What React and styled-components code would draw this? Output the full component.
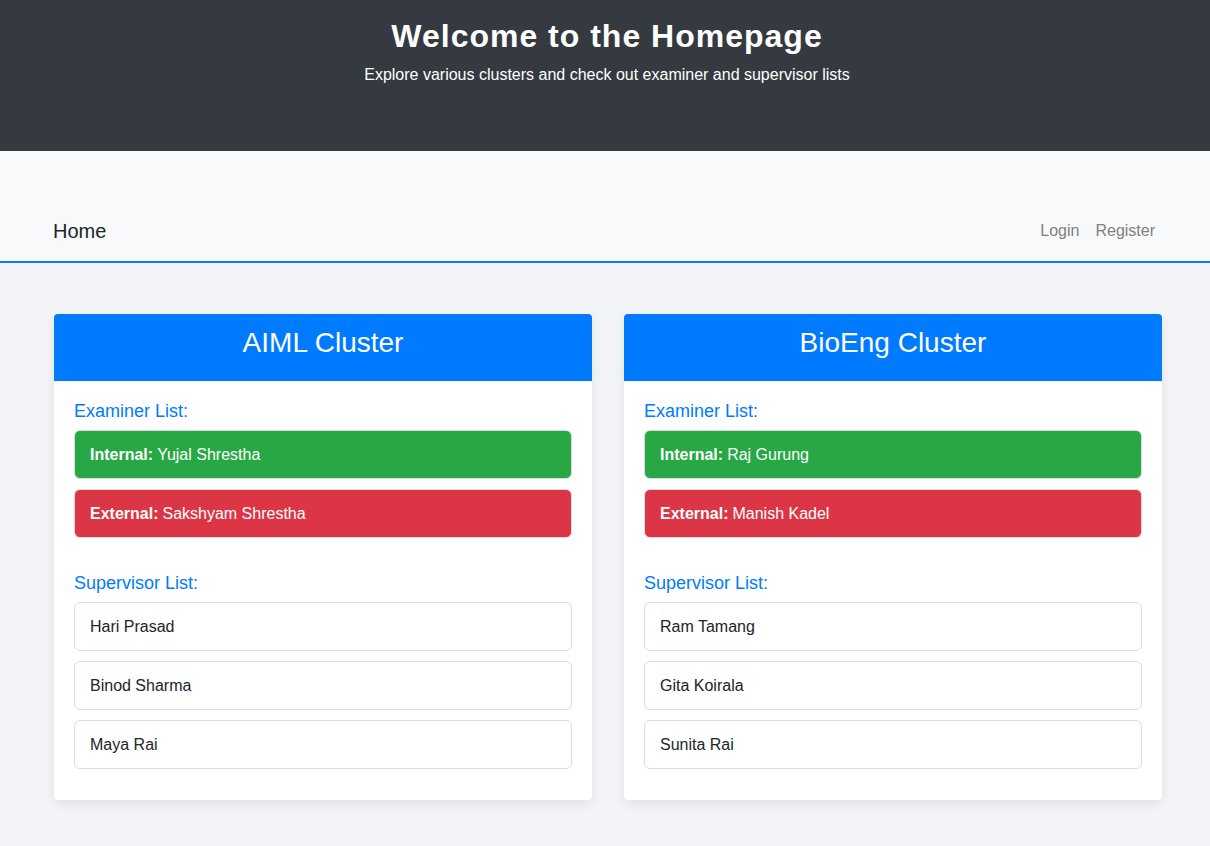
import React from "react";
import styled, { createGlobalStyle } from "styled-components";

const clusters = [
  {
    name: "AIML Cluster",
    internal: "Yujal Shrestha",
    external: "Sakshyam Shrestha",
    supervisors: ["Hari Prasad", "Binod Sharma", "Maya Rai"],
  },
  {
    name: "BioEng Cluster",
    internal: "Raj Gurung",
    external: "Manish Kadel",
    supervisors: ["Ram Tamang", "Gita Koirala", "Sunita Rai"],
  },
];

const GlobalStyle = createGlobalStyle`
  body {
    margin: 0;
    font-family: "Liberation Sans", Arial, sans-serif;
    background: #f3f4f7;
  }
`;

const App = () => {
  return (
    <>
      <GlobalStyle />
      <Header>
        <Title>Welcome to the Homepage</Title>
        <Subtitle>Explore various clusters and check out examiner and supervisor lists</Subtitle>
      </Header>
      <NavBar>
        <Brand>Home</Brand>
        <NavLinks>
          <NavLink>Login</NavLink>
          <NavLink>Register</NavLink>
        </NavLinks>
      </NavBar>
      <Main>
        {clusters.map((c) => (
          <Card key={c.name}>
            <CardHeader>{c.name}</CardHeader>
            <CardBody>
              <ListLabel>Examiner List:</ListLabel>
              <List>
                <Item $variant="green">
                  <b>Internal:</b> {c.internal}
                </Item>
                <Item $variant="red">
                  <b>External:</b> {c.external}
                </Item>
              </List>
              <ListLabel $spaced>Supervisor List:</ListLabel>
              <List>
                {c.supervisors.map((s) => (
                  <Item key={s}>{s}</Item>
                ))}
              </List>
            </CardBody>
          </Card>
        ))}
      </Main>
    </>
  );
};

export default App;

const Header = styled.header`
  background-color: #343a40;
  color: #fff;
  height: 151px;
  box-sizing: border-box;
  padding-top: 17px;
  text-align: center;
`;
const Title = styled.h1`
  margin: 0 0 0 4px;
  font-size: 32px;
  font-weight: 700;
  letter-spacing: 1px;
  line-height: 38px;
`;
const Subtitle = styled.p`
  margin: 10px 0 0 4px;
  font-size: 16px;
  line-height: 20px;
`;
const NavBar = styled.nav`
  background-color: #f8f9fa;
  height: 112px;
  box-sizing: border-box;
  border-bottom: 2px solid #007bff;
  display: flex;
  align-items: flex-end;
  justify-content: space-between;
  padding: 0 55px 18px 53px;
`;
const Brand = styled.div`
  font-size: 20px;
  color: #212529;
  line-height: 24px;
`;
const NavLinks = styled.div`
  display: flex;
  gap: 16px;
  padding-bottom: 2px;
`;
const NavLink = styled.a`
  font-size: 16px;
  color: #808080;
  line-height: 20px;
  cursor: pointer;
`;
const Main = styled.main`
  display: grid;
  grid-template-columns: 538px 538px;
  gap: 32px;
  padding: 51px 54px 46px;
`;
const Card = styled.section`
  background: #fff;
  border-radius: 4px;
  overflow: hidden;
  box-shadow: 0 4px 12px rgba(0, 0, 0, 0.08);
`;
const CardHeader = styled.h2`
  margin: 0;
  height: 67px;
  background-color: #007bff;
  color: #fff;
  font-size: 28px;
  font-weight: 400;
  display: flex;
  align-items: center;
  justify-content: center;
  padding-bottom: 10px;
  box-sizing: border-box;
`;
const CardBody = styled.div`
  padding: 20px 20px 31px;
`;
const ListLabel = styled.h3`
  margin: ${(p) => (p.$spaced ? "35px" : "0")} 0 8px;
  font-size: 18px;
  font-weight: 400;
  color: #007bff;
  line-height: 21px;
`;
const List = styled.div`
  display: flex;
  flex-direction: column;
  gap: 10px;
`;
const itemColors = {
  green: { bg: "#28a745", fg: "#fff" },
  red: { bg: "#dc3545", fg: "#fff" },
  plain: { bg: "#fff", fg: "#212529" },
};
const Item = styled.div`
  height: 49px;
  box-sizing: border-box;
  display: flex;
  align-items: center;
  gap: 4px;
  padding: 0 15px;
  font-size: 16px;
  border: 1px solid #dcdcdc;
  border-radius: 6px;
  background-color: ${(p) => itemColors[p.$variant || "plain"].bg};
  color: ${(p) => itemColors[p.$variant || "plain"].fg};
`;
